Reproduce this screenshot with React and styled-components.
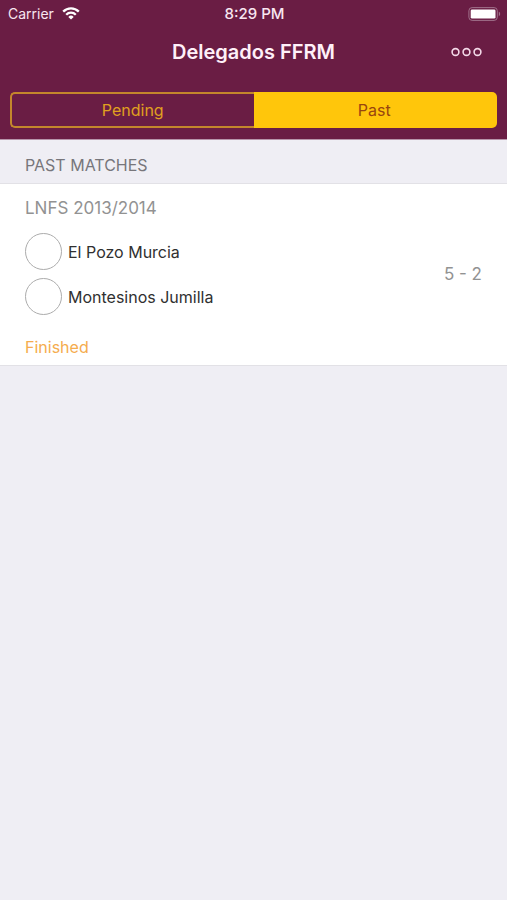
import React, { useState } from 'react';
import { createGlobalStyle, styled } from 'styled-components';

const colors = {
  primary: '#6a1d44',
  primaryEdge: '#b795aa',
  accent: '#ffc60b',
  accentDim: '#e0a01f',
  accentEdge: '#c4862c',
  pastText: '#98450f',
  background: '#efeef4',
  line: '#e2e1e6',
  sectionText: '#77767b',
  gray: '#929292',
  text: '#303030',
  finished: '#f5ac4e',
};

const tabs = [
  { id: 'pending', label: 'Pending' },
  { id: 'past', label: 'Past' },
];

const matches = [
  {
    id: 1,
    competition: 'LNFS 2013/2014',
    teams: ['El Pozo Murcia', 'Montesinos Jumilla'],
    score: '5 - 2',
    status: 'Finished',
  },
];

const WifiIcon = () => (
  <svg width="18" height="14" viewBox="0 0 18 14" fill="none" stroke="#fff" strokeWidth="2.3" aria-hidden="true">
    <path d="M1.2 4.6a11 11 0 0 1 15.6 0" />
    <path d="M4.2 7.7a6.8 6.8 0 0 1 9.6 0" />
    <path d="M9 12.6 6.3 9.9a3.8 3.8 0 0 1 5.4 0z" fill="#fff" stroke="none" />
  </svg>
);

const BatteryIcon = () => (
  <svg width="33" height="14" viewBox="0 0 33 14" aria-hidden="true">
    <rect x="0.9" y="0.6" width="28.4" height="12.8" rx="3.2" fill="none" stroke="#a0718b" strokeWidth="1" />
    <rect x="2.7" y="2.4" width="24.8" height="9.2" rx="1.4" fill="#fff" />
    <path d="M30.8 4.8c1.8.6 1.8 3.8 0 4.4z" fill="#a0718b" />
  </svg>
);

const MoreIcon = () => (
  <svg width="32" height="10" viewBox="0 0 32 10" fill="none" stroke="#f3d9e8" strokeWidth="1.6" aria-hidden="true">
    <circle cx="4.5" cy="5" r="3.4" />
    <circle cx="15.5" cy="5" r="3.4" />
    <circle cx="26.5" cy="5" r="3.4" />
  </svg>
);

const App = () => {
  const [selected, setSelected] = useState('past');

  return (
    <>
      <GlobalStyle />
      <SHeader>
        <SStatusBar>
          <SCarrier>
            Carrier
            <WifiIcon />
          </SCarrier>
          <STime>8:29 PM</STime>
          <SBattery>
            <BatteryIcon />
          </SBattery>
        </SStatusBar>
        <SNavBar>
          <STitle>Delegados FFRM</STitle>
          <SMoreButton type="button" aria-label="More">
            <MoreIcon />
          </SMoreButton>
        </SNavBar>
        <SSegments>
          {tabs.map(({ id, label }) => (
            <SSegment
              key={id}
              type="button"
              aria-pressed={selected === id}
              $active={selected === id}
              onClick={() => setSelected(id)}
            >
              {label}
            </SSegment>
          ))}
        </SSegments>
      </SHeader>
      <main>
        <SSectionTitle>{selected === 'past' ? 'PAST MATCHES' : 'PENDING MATCHES'}</SSectionTitle>
        {selected === 'past' && (
          <SMatchList>
            {matches.map((match) => (
              <SMatch key={match.id}>
                <SCompetition>{match.competition}</SCompetition>
                <SResult>
                  <STeams>
                    {match.teams.map((team) => (
                      <STeam key={team}>
                        <SBadge />
                        {team}
                      </STeam>
                    ))}
                  </STeams>
                  <SScore>{match.score}</SScore>
                </SResult>
                <SStatus>{match.status}</SStatus>
              </SMatch>
            ))}
          </SMatchList>
        )}
      </main>
    </>
  );
};

const GlobalStyle = createGlobalStyle`
  * {
    box-sizing: border-box;
  }

  body {
    margin: 0;
    background-color: ${colors.background};
    font-family: Inter, sans-serif;
    font-size: 16px;
    line-height: 20px;
  }

  button {
    padding: 0;
    border: 0;
    background: none;
    font: inherit;
    cursor: pointer;
  }

  svg {
    display: block;
  }
`;

const SHeader = styled.header`
  padding-bottom: 11px;
  border-bottom: 1px solid ${colors.primaryEdge};
  background-color: ${colors.primary};
`;

const SStatusBar = styled.div`
  display: grid;
  grid-template-columns: 1fr auto 1fr;
  align-items: center;
  height: 28px;
  padding: 0 6px 0 8px;
  color: #f8e6f0;
  font-size: 14px;
`;

const SCarrier = styled.div`
  display: flex;
  align-items: center;
  gap: 8px;
`;

const STime = styled.div`
  font-size: 15px;
  font-weight: 500;
`;

const SBattery = styled.div`
  display: flex;
  justify-content: flex-end;
`;

const SNavBar = styled.div`
  display: grid;
  grid-template-columns: 1fr auto 1fr;
  align-items: center;
  height: 48px;
  margin-bottom: 16px;
  padding: 0 24px;
`;

const STitle = styled.h1`
  grid-column: 2;
  margin: 0;
  color: #fff0f8;
  font-size: 20px;
  font-weight: 600;
`;

const SMoreButton = styled.button`
  justify-self: end;
`;

const SSegments = styled.div`
  display: flex;
  height: 36px;
  margin: 0 10px;
`;

const SSegment = styled.button`
  flex: 1;
  border: solid ${({ $active }) => ($active ? colors.accent : colors.accentEdge)};
  border-width: 2px;
  background-color: ${({ $active }) => ($active ? colors.accent : 'transparent')};
  color: ${({ $active }) => ($active ? colors.pastText : colors.accentDim)};

  &:first-child {
    border-right-width: 0;
    border-radius: 5px 0 0 5px;
  }

  &:last-child {
    border-left-width: 0;
    border-radius: 0 5px 5px 0;
  }
`;

const SSectionTitle = styled.h2`
  margin: 0;
  padding: 15px 25px 8px;
  border-bottom: 1px solid ${colors.line};
  color: ${colors.sectionText};
  font-size: 16px;
  font-weight: 400;
`;

const SMatchList = styled.ul`
  margin: 0;
  padding: 0;
  list-style: none;
`;

const SMatch = styled.li`
  padding: 14px 25px 8px;
  border-bottom: 1px solid ${colors.line};
  background-color: #fff;
`;

const SCompetition = styled.div`
  color: ${colors.gray};
  font-size: 17px;
`;

const SResult = styled.div`
  display: flex;
  justify-content: space-between;
  align-items: center;
  padding: 15px 0 22px;
`;

const STeams = styled.div`
  display: flex;
  flex-direction: column;
  gap: 8px;
`;

const STeam = styled.div`
  display: flex;
  align-items: center;
  gap: 6px;
  color: ${colors.text};
`;

const SBadge = styled.span`
  width: 37px;
  height: 37px;
  border: 1px solid #acacac;
  border-radius: 50%;
`;

const SScore = styled.div`
  color: ${colors.gray};
  font-size: 17px;
`;

const SStatus = styled.div`
  color: ${colors.finished};
`;

export default App;
